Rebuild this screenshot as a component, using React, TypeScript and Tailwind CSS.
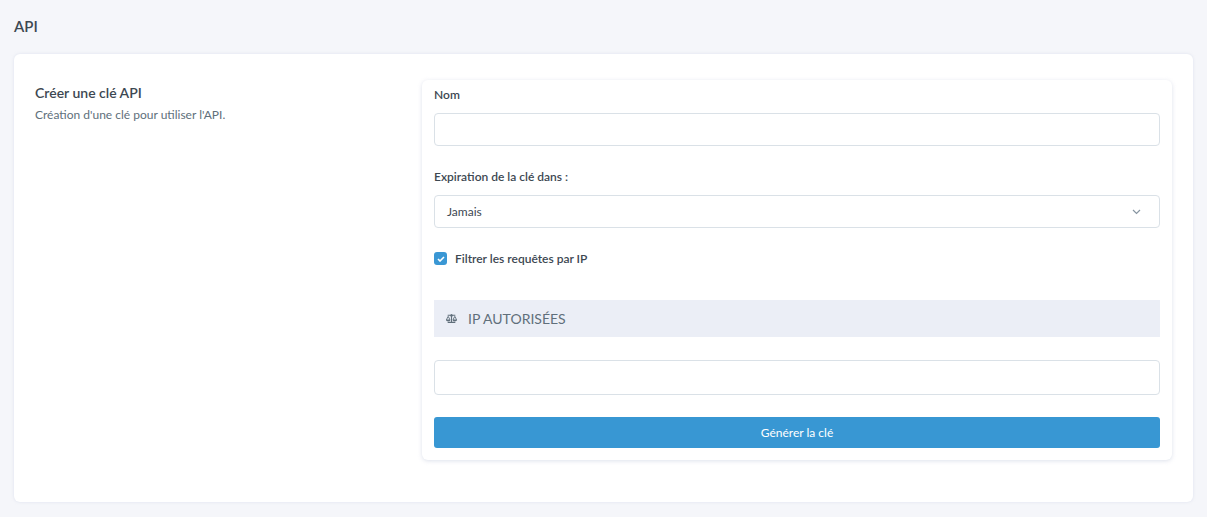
import { FaBalanceScale } from "react-icons/fa";

// API key creation page

export default function App() {
  return (
    <div
      className="min-h-[517px] bg-[#f5f6fa] px-[14px] pt-[14px] pb-3 text-[#3d4852]"
      style={{ fontFamily: "Lato, 'Open Sans', sans-serif" }}
    >
      <h1 className="h-[24px] text-[15px] font-semibold leading-[24px] text-[#3d4852]">API</h1>

      <div className="mt-[16px] flex rounded-md bg-white px-[21px] pt-[26px] pb-[42px] shadow-[0_0_3px_rgba(200,205,225,0.5)]">
        {/* Left description */}
        <div className="w-[387px] shrink-0 pt-[3px]">
          <h2 className="text-[14px] font-semibold leading-[20px] text-[#3d4852]">Créer une clé API</h2>
          <p className="mt-[4px] text-[12px] leading-[16px] text-[#606f7b]">
            Création d'une clé pour utiliser l'API.
          </p>
        </div>

        {/* Form card */}
        <div className="flex-1 rounded-md bg-white px-3 pt-[6px] pb-3 shadow-[0_1px_4px_rgba(180,188,210,0.45)]">
          <label className="block text-[12px] font-semibold leading-[18px] text-[#3d4852]">Nom</label>
          <input
            type="text"
            className="mt-[9px] block h-[33px] w-full rounded border border-[#dae1e7] bg-white px-3 text-[12px] outline-none"
          />

          <label className="mt-[22px] block text-[12px] font-semibold leading-[18px] text-[#3d4852]">
            Expiration de la clé dans :
          </label>
          <div className="relative mt-[9px] flex h-[33px] w-full items-center rounded border border-[#dae1e7] bg-white px-3 text-[12px] text-[#3d4852]">
            Jamais
            <svg
              className="absolute right-[18px] top-1/2 -translate-y-1/2"
              width="9"
              height="6"
              viewBox="0 0 9 6"
              fill="none"
              stroke="#8795a1"
              strokeWidth="1.2"
            >
              <path d="M1 1l3.5 3.5L8 1" />
            </svg>
          </div>

          <div className="mt-[20px] flex h-[21px] items-center gap-[8px]">
            <span className="flex h-[13px] w-[13px] items-center justify-center rounded-[3px] bg-[#3a97d4]">
              <svg width="8" height="6" viewBox="0 0 8 6" fill="none" stroke="white" strokeWidth="1.6">
                <path d="M1 3l2 2 4-4" />
              </svg>
            </span>
            <span className="text-[12px] font-semibold text-[#3d4852]">Filtrer les requêtes par IP</span>
          </div>

          <div className="mt-[31px] flex h-[37px] items-center gap-[11px] bg-[#ebeef6] px-3 text-[#606f7b]">
            <FaBalanceScale className="h-[11px] w-[11px] text-[#606f7b]" />
            <span className="text-[14px] uppercase">IP autorisées</span>
          </div>

          <input
            type="text"
            className="mt-[23px] block h-[35px] w-full rounded border border-[#dae1e7] bg-white px-3 text-[12px] outline-none"
          />

          <button className="mt-[22px] flex h-[31px] w-full items-center justify-center rounded-[3px] bg-[#3897d3] text-[12px] text-white">
            Générer la clé
          </button>
        </div>
      </div>
    </div>
  );
}
